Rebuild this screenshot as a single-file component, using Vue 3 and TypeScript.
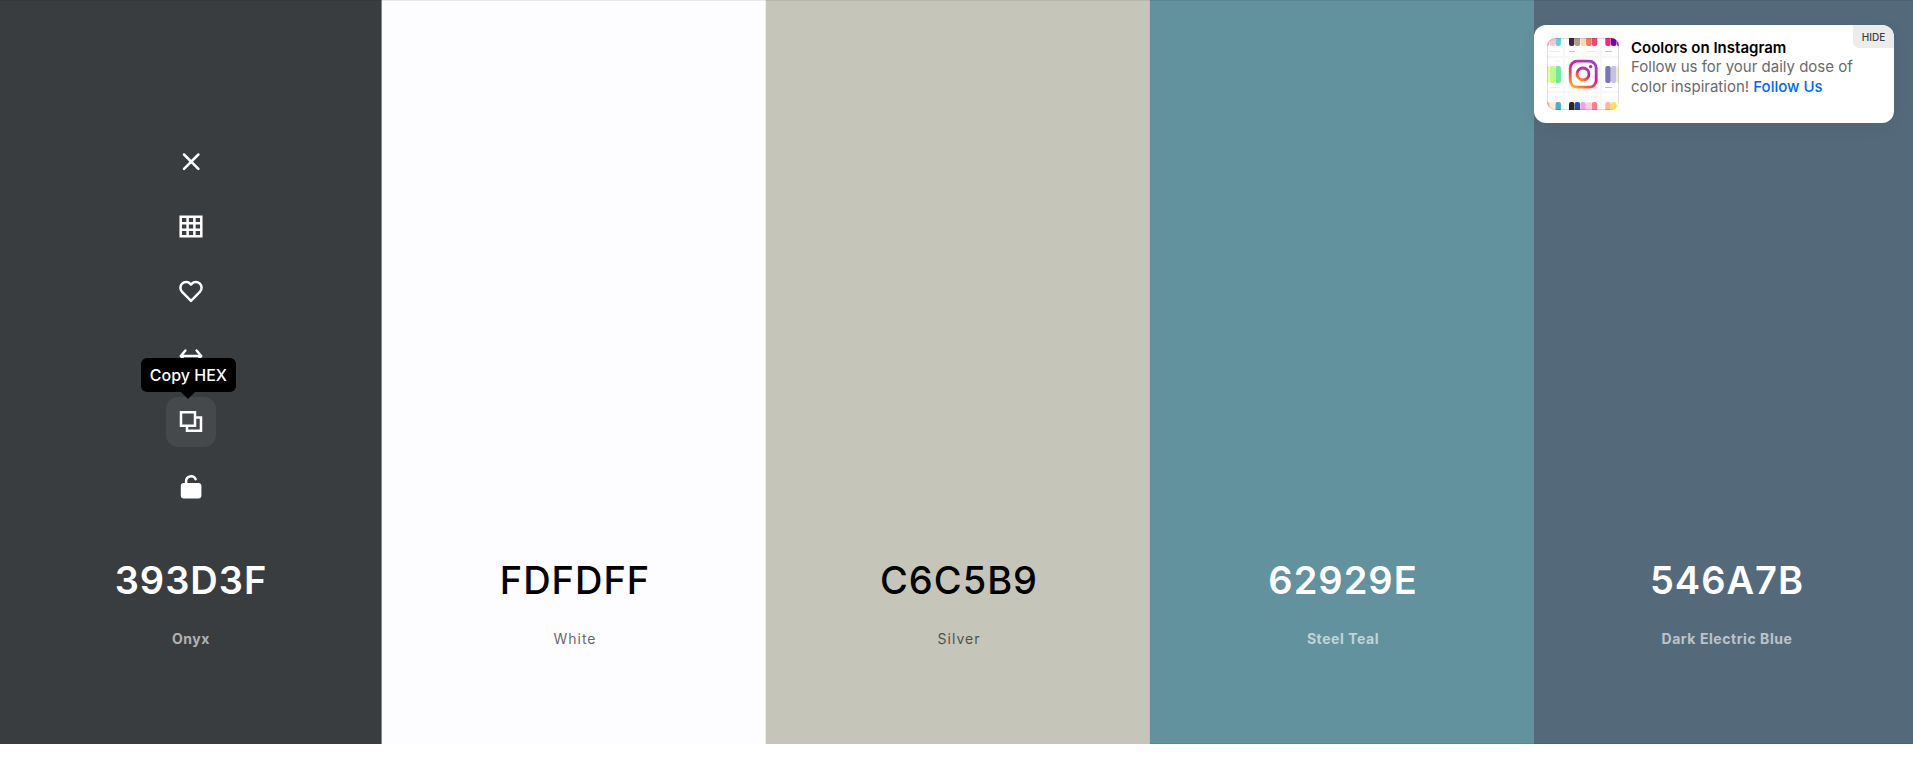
<script setup lang="ts">
interface Swatch {
  hex: string
  name: string
  tone: 'light' | 'dark'
}

interface Bar {
  x: number
  y: number
  h: number
  fill: string
}

const swatches: Swatch[] = [
  { hex: '393D3F', name: 'Onyx', tone: 'dark' },
  { hex: 'FDFDFF', name: 'White', tone: 'light' },
  { hex: 'C6C5B9', name: 'Silver', tone: 'light' },
  { hex: '62929E', name: 'Steel Teal', tone: 'dark' },
  { hex: '546A7B', name: 'Dark Electric Blue', tone: 'dark' },
]

const row = (y: number, h: number, items: [number, string][]): Bar[] =>
  items.map(([x, fill]) => ({ x, y, h, fill }))

const bars: Bar[] = [
  ...row(-6, 14, [[-3, '#f3b9c2'], [2.8, '#f5c6cc'], [8.5, '#62d2e3'], [22, '#4a1f4f'], [27.7, '#aaa27d'], [33.4, '#f9d8bd'], [39.1, '#f4795b'], [44.8, '#f0476f'], [58.3, '#fb1f8f'], [64, '#5c10b2'], [69.7, '#b51fc4']]),
  ...row(28, 17, [[-2.9, '#f4f49a'], [2.8, '#b9fb90'], [8.5, '#6de9a0'], [58.3, '#7a74b8'], [64, '#c7c2e2'], [69.7, '#f1efb8']]),
  ...row(64, 14, [[-2.9, '#f6b8a4'], [2.8, '#ffeddc'], [8.5, '#47b2c2'], [22, '#24272b'], [27.7, '#2050a6'], [33.4, '#fb9ee2'], [39.1, '#ffd0d6'], [44.8, '#ff7f84'], [58.3, '#ffb98c'], [64, '#ffe14f']]),
]
</script>

<template>
  <main class="app">
    <div class="palette">
      <section
        v-for="(swatch, index) in swatches"
        :key="swatch.hex"
        class="swatch"
        :class="swatch.tone"
        :style="{ backgroundColor: '#' + swatch.hex }"
      >
        <div v-if="index === 0" class="tools">
          <button type="button" class="tool" aria-label="Remove color">
            <svg viewBox="0 0 24 24"><path d="M5 4.5l14.4 14.4M19.4 4.5L5 18.9" /></svg>
          </button>
          <button type="button" class="tool" aria-label="View shades">
            <svg viewBox="0 0 24 24"><path class="mitre" d="M1.7 1.7h20.6v19.6H1.7zM8.6 1.7v20M15.4 1.7v20M1.7 8.2h20.8M1.7 14.8h20.8" /></svg>
          </button>
          <button type="button" class="tool" aria-label="Save color">
            <svg viewBox="0 0 24 24"><path d="M12 20.8L3.1 11.9a5.8 5.8 0 0 1 0-8.2c2.3-2.3 6-2.2 8.2.1l.7.7.7-.7c2.2-2.3 5.9-2.4 8.2-.1a5.8 5.8 0 0 1 0 8.2z" /></svg>
          </button>
          <button type="button" class="tool" aria-label="Drag color">
            <svg viewBox="0 0 24 24"><path d="M1.8 11h20.4M6.4 5.5L1.8 11l4.6 5.5M17.6 5.5l4.6 5.5-4.6 5.5" /></svg>
          </button>
          <button type="button" class="tool active" aria-describedby="copy-tip" aria-label="Copy HEX">
            <svg viewBox="0 0 24 24"><path class="mitre" d="M2 2.2h14v13.6H2zM16 7.6h6v13.2H8v-5" /></svg>
            <span id="copy-tip" class="tooltip" role="tooltip">Copy HEX</span>
          </button>
          <button type="button" class="tool" aria-label="Toggle lock">
            <svg viewBox="0 0 24 24">
              <rect class="solid" x="1.8" y="8" width="20.6" height="15.6" rx="3" />
              <path d="M7.1 9V6.4a5 5 0 0 1 9.5-2.2" />
            </svg>
          </button>
        </div>
        <button type="button" class="hex">{{ swatch.hex }}</button>
        <button type="button" class="name">{{ swatch.name }}</button>
      </section>
    </div>

    <aside class="promo">
      <svg class="thumb" viewBox="0 0 72 72" aria-hidden="true">
        <defs>
          <linearGradient id="insta" x1="0.1" y1="1" x2="0.7" y2="0">
            <stop offset="0" stop-color="#fdb32d" />
            <stop offset="0.25" stop-color="#fb5b35" />
            <stop offset="0.6" stop-color="#e9148a" />
            <stop offset="1" stop-color="#a13fc0" />
          </linearGradient>
        </defs>
        <rect width="72" height="72" fill="#fff" />
        <path d="M17 0v72M54 0v72M0 19h72M0 54h72" stroke="#f7f7f8" stroke-width="2" />
        <rect
          v-for="(bar, i) in bars"
          :key="i"
          :x="bar.x"
          :y="bar.y"
          width="5.4"
          :height="bar.h"
          rx="2"
          :fill="bar.fill"
        />
        <path d="M3 13.5h10M40 13.5h10M8 23h5M3 49.5h10M8 59h5M44 59h6" stroke="#ececef" stroke-width="1" />
        <path d="M22 13.5h6M58 13.5h7M58 49.5h7" stroke="#c4c4c8" stroke-width="1" />
        <rect x="23.2" y="23.2" width="26" height="26" rx="7" fill="none" stroke="url(#insta)" stroke-width="2.8" />
        <circle cx="36" cy="36" r="6" fill="none" stroke="url(#insta)" stroke-width="2.8" />
        <circle cx="43.6" cy="28.6" r="1.7" fill="#c81fa8" />
        <rect class="frame" x="0.5" y="0.5" width="71" height="71" rx="8" />
      </svg>
      <div class="copy">
        <h2>Coolors on Instagram</h2>
        <p>Follow us for your daily dose of color inspiration! <a href="#">Follow Us</a></p>
      </div>
      <button type="button" class="hide">HIDE</button>
    </aside>
  </main>
</template>

<style>
body {
  margin: 0;
  background: #fff;
}
</style>

<style scoped>
.app {
  box-sizing: border-box;
  position: relative;
  display: flex;
  min-height: 100vh;
  padding-bottom: 33px;
  overflow: hidden;
  font-family: Inter, "Liberation Sans", sans-serif;
}

button {
  margin: 0;
  padding: 0;
  border: 0;
  background: none;
  color: inherit;
  font-family: inherit;
  cursor: pointer;
}

.palette {
  flex: 1;
  display: flex;
  margin: 0 -5px 0 -2px;
}

.swatch {
  flex: 1 1 0;
  box-sizing: border-box;
  display: flex;
  flex-direction: column;
  align-items: center;
  justify-content: flex-end;
  padding: 0 0 94px 2px;
  box-shadow: inset 0 1px 0 rgba(0, 0, 0, 0.08), inset -1px 0 0 rgba(128, 128, 128, 0.12);
  color: #000;
}

.swatch.dark {
  box-shadow: inset 0 1px 0 rgba(0, 0, 0, 0.08), inset -1px 0 0 rgba(128, 128, 128, 0.12), inset 0 -1px 0 rgba(0, 0, 0, 0.08);
  color: #fff;
}

.swatch:first-child {
  box-shadow: inset 0 1px 0 rgba(0, 0, 0, 0.08), inset -1px 0 0 #85878a;
}

.tools {
  display: flex;
  flex-direction: column;
  gap: 15px;
  margin-bottom: 40px;
}

.tool {
  position: relative;
  display: grid;
  place-items: center;
  width: 50px;
  height: 50px;
  border-radius: 12px;
}

.tool.active {
  background: #46494c;
}

.tool svg {
  width: 24px;
  height: 24px;
  fill: none;
  stroke: #fff;
  stroke-width: 2.5;
  stroke-linecap: round;
  stroke-linejoin: round;
}

.tool .mitre {
  stroke-linecap: butt;
  stroke-linejoin: miter;
}

.tool .solid {
  fill: #fff;
  stroke: none;
}

.tooltip {
  position: absolute;
  z-index: 1;
  right: -20px;
  bottom: 55px;
  padding: 0 9px;
  border-radius: 6px;
  background: #000;
  color: #fff;
  font-size: 16px;
  font-weight: 500;
  line-height: 34px;
  white-space: nowrap;
}

.tooltip::after {
  content: "";
  position: absolute;
  top: 100%;
  left: 50%;
  margin-left: -7px;
  border: 7px solid transparent;
  border-top-color: #000;
  border-bottom: 0;
}

.hex {
  font-size: 38px;
  font-weight: 500;
  line-height: 56px;
  letter-spacing: 1px;
}

.dark .hex {
  font-weight: 600;
}

.name {
  margin-top: 20px;
  font-size: 14px;
  font-weight: 400;
  line-height: 22px;
  letter-spacing: 1px;
  opacity: 0.6;
}

.dark .name {
  font-weight: 700;
  letter-spacing: 0.04em;
}

.promo {
  position: absolute;
  top: 25px;
  right: 19px;
  box-sizing: border-box;
  display: flex;
  gap: 12px;
  width: 360px;
  padding: 13px;
  overflow: hidden;
  border-radius: 12px;
  background: #fff;
  box-shadow: 0 4px 16px rgba(0, 0, 0, 0.06);
}

.thumb {
  flex: none;
  width: 72px;
  height: 72px;
  border-radius: 8px;
}

.frame {
  fill: none;
  stroke: rgba(0, 0, 0, 0.12);
}

.copy {
  font-size: 15px;
  line-height: 20px;
}

.copy h2 {
  margin: 0;
  color: #000;
  font-size: 15px;
  font-weight: 600;
  line-height: 19px;
}

.copy p {
  margin: 0;
  color: #6a6a6e;
}

.copy a {
  color: #0066ff;
  font-weight: 500;
  text-decoration: none;
}

.hide {
  position: absolute;
  top: 0;
  right: 0;
  width: 41px;
  height: 23px;
  border-radius: 0 0 0 6px;
  background: #ececec;
  color: #3c3c40;
  font-size: 10px;
  font-weight: 500;
}
</style>
